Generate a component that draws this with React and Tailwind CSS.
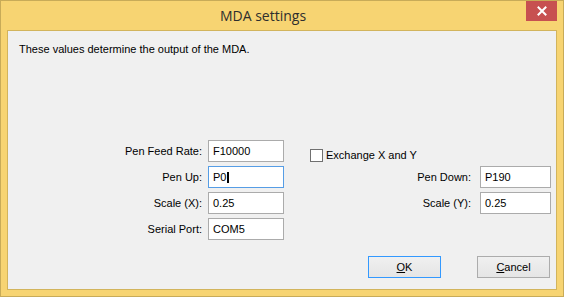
export default function App() {
  const sans = { fontFamily: '"Liberation Sans", Arial, sans-serif' };
  const Box = ({ value, focused, caret, w = "w-[76px]" }) => (
    <div
      className={`${w} h-[22px] bg-white border ${focused ? "border-[#569de5]" : "border-[#ababab]"} flex items-center pl-[4px] text-[11px] text-black`}
    >
      <span>{value}</span>
      {caret && <span className="inline-block w-[2px] h-[11px] bg-black ml-[1px]" />}
    </div>
  );
  const Label = ({ children, pr = "pr-[6px]" }) => (
    <div className={`flex items-center justify-end ${pr} text-[11px] text-black`}>{children}</div>
  );
  return (
    <div className="w-[564px] h-[297px] bg-[#f7d472] border border-[#c8ab58] flex flex-col relative" style={sans}>
      <div className="h-[29px] flex items-center justify-center pr-[38px]">
        <span className="text-[14px] text-[#2e2e2e]" style={{ fontFamily: '"Open Sans", "Noto Sans", sans-serif' }}>
          MDA settings
        </span>
      </div>
      <div className="absolute top-0 right-[6px] w-[31px] h-[20px] bg-[#c75050] flex items-center justify-center">
        <svg width="10" height="10" viewBox="0 0 10 10">
          <path d="M1.5 1.5 L8.5 8.5 M8.5 1.5 L1.5 8.5" stroke="white" strokeWidth="2" strokeLinecap="square" />
        </svg>
      </div>
      <div className="flex-1 mx-[6px] mb-[6px] border border-[#d2b45c] bg-[#f0f0f0] flex flex-col">
        <div className="pl-[11px] pt-[12px] text-[11px] leading-[13px] text-black">
          These values determine the output of the MDA.
        </div>
        <div className="mt-[84px] grid grid-cols-[200px_76px_196px_71px] grid-rows-[22px_22px_22px_22px] gap-y-[4px]">
          <Label>Pen Feed Rate:</Label>
          <Box value="F10000" />
          <div className="col-span-2 flex items-start pl-[26px]">
            <div className="mt-[7px] flex items-center gap-[3px]">
              <div className="w-[13px] h-[13px] bg-white border border-[#707070]" />
              <span className="text-[11px] text-black">Exchange X and Y</span>
            </div>
          </div>

          <Label>Pen Up:</Label>
          <Box value="P0" focused caret />
          <Label pr="pr-[9px]">Pen Down:</Label>
          <Box value="P190" w="w-[71px]" />

          <Label>Scale (X):</Label>
          <Box value="0.25" />
          <Label pr="pr-[9px]">Scale (Y):</Label>
          <Box value="0.25" w="w-[71px]" />

          <Label>Serial Port:</Label>
          <Box value="COM5" />
          <div />
          <div />
        </div>
        <div className="mt-[16px] flex justify-end gap-[36px] pr-[6px]">
          <div className="w-[73px] h-[22px] border border-[#3399ff] bg-gradient-to-b from-[#f0f0f0] to-[#e5e5e5] flex items-center justify-center text-[11px] text-black">
            <span><span className="underline">O</span>K</span>
          </div>
          <div className="w-[73px] h-[22px] border border-[#acacac] bg-gradient-to-b from-[#f0f0f0] to-[#e5e5e5] flex items-center justify-center text-[11px] text-black">
            <span><span className="underline">C</span>ancel</span>
          </div>
        </div>
      </div>
    </div>
  );
}
